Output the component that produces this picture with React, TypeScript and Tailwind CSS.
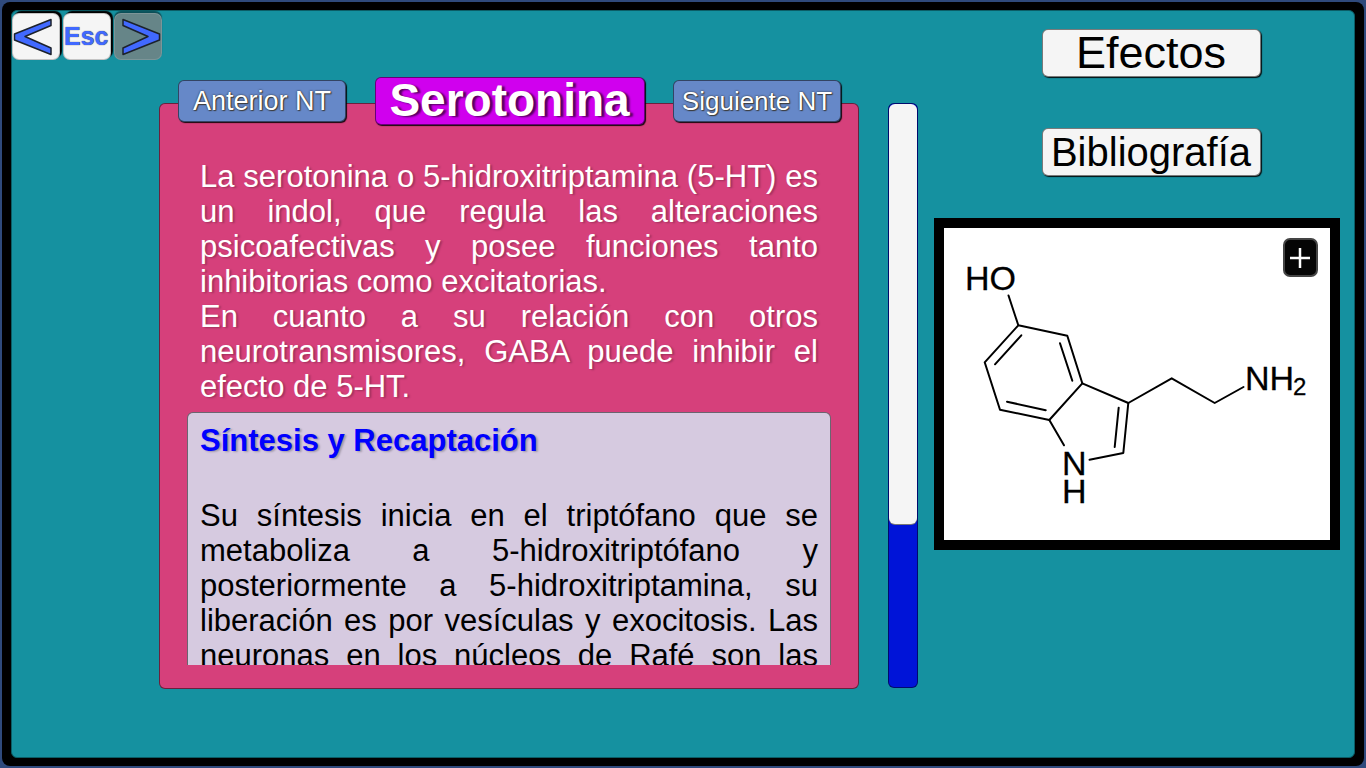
import { useRef } from "react";
import type { ChangeEvent, ReactNode } from "react";

const raised =
  "rounded-[6px] border border-black/50 shadow-[1px_1px_1px_rgba(0,0,0,0.9)]";

interface NavButtonProps {
  label: string;
  align: string;
  disabled?: boolean;
  children: ReactNode;
}

function NavButton({ label, align, disabled, children }: NavButtonProps) {
  return (
    <button
      type="button"
      aria-label={label}
      disabled={disabled}
      className={`${align} flex h-[47px] w-12 shrink-0 items-center rounded-[7px] border border-black/20 bg-[#f5f5f5] shadow-[2px_-2px_1px_#000] disabled:border-[#8aa0a3]/60 disabled:bg-[#668588] disabled:shadow-[0_-2px_1px_rgba(0,0,0,0.45)]`}
    >
      {children}
    </button>
  );
}

function Chevron({ flip }: { flip?: boolean }) {
  return (
    <svg viewBox="0 0 40 38" className="h-[38px] w-10 shrink-0" aria-hidden="true">
      <path
        d={flip ? "M2 1.5V7.5L27 18.5L2 30V36.5L38.5 22V16Z" : "M38 1.5V7.5L12 18.5L38 30V36.5L1.5 22V16Z"}
        fill="#4169ff"
        stroke="#1c222c"
        strokeWidth="1.5"
        strokeLinejoin="round"
      />
    </svg>
  );
}

function Molecule() {
  return (
    <svg
      viewBox="0 0 386 312"
      role="img"
      aria-label="Estructura de la serotonina"
      className="block w-full"
    >
      <g fill="none" stroke="#000" strokeWidth="2" strokeLinecap="round" strokeLinejoin="round">
        <path d="M64.5 67.5L74.3 97.3L123.3 107.7L138.3 155.3L105.3 192L56 181.7L40.7 134.3L74.3 97.3" />
        <path d="M77.3 107.3L51 136.3M116 115.3L128.3 152.7M101.7 182.3L63 173.7" />
        <path d="M138.3 155.3L184.3 175L179.3 225L145.5 231.7M174.7 179.7L170.7 219M105.3 192L120 217.3" />
        <path d="M184.3 175L227.7 150.3L270.7 175L299.5 159" />
      </g>
      <g className="font-['Liberation_Sans',Arial,sans-serif]" fill="#000" stroke="#000" strokeWidth="0.3" fontSize="34">
        <text x="21" y="62">HO</text>
        <text x="118" y="247">N</text>
        <text x="118" y="275">H</text>
        <text x="301" y="162">NH</text>
        <text x="349" y="167" fontSize="24">2</text>
      </g>
    </svg>
  );
}

export default function App() {
  const viewport = useRef<HTMLDivElement>(null);

  const scrollText = (event: ChangeEvent<HTMLInputElement>) => {
    const box = viewport.current;
    if (box) {
      box.scrollTop = (Number(event.target.value) / 100) * (box.scrollHeight - box.clientHeight);
    }
  };

  return (
    <div className="h-screen min-h-[600px] w-full bg-[#2f4a7c] p-[2px] font-['Liberation_Sans',Arial,sans-serif]">
      <div className="h-full rounded-[8px] bg-black px-[9px] py-2">
        <main className="flex h-full items-start rounded-[6px] border border-[#0b5d66] bg-[#1591a0]">
          <nav aria-label="Navegación" className="flex w-0 min-w-[147px] flex-1 gap-[3px] pt-[2px]">
            <NavButton label="Atrás" align="justify-start"><Chevron /></NavButton>
            <NavButton label="Salir" align="justify-start">
              <span className="text-[25px] font-bold text-[#4169ff] [text-shadow:0_0_1px_#1c222c]">Esc</span>
            </NavButton>
            <NavButton label="Adelante" align="justify-end" disabled><Chevron flip /></NavButton>
          </nav>

          <article className="flex h-full w-[700px] flex-col pt-[66px] pb-[68px]">
            <header className="relative z-10 -mb-[22px] flex items-center justify-between pr-[18px] pl-[19px]">
              <button type="button" className={`${raised} h-[42px] w-[168px] bg-[#6688c8] text-[27px] leading-none text-white [text-shadow:0_0_2px_#222,1px_1px_1px_#444]`}>
                Anterior NT
              </button>
              <h1 className={`${raised} flex h-12 w-[270px] items-center justify-center bg-[#d000ee] pb-[2px] text-[46px] leading-none font-bold text-white [text-shadow:3px_1px_2px_rgba(0,0,0,0.6)]`}>
                Serotonina
              </h1>
              <button type="button" className={`${raised} h-[42px] w-[168px] bg-[#6688c8] text-[26px] leading-none text-white [text-shadow:0_0_2px_#222,1px_1px_1px_#444]`}>
                Siguiente NT
              </button>
            </header>

            <section className="flex min-h-0 flex-1 flex-col rounded-[6px] border border-black/50 bg-[#d6407b] px-[27px] pt-[55px] pb-[23px]">
              <div ref={viewport} className="min-h-0 flex-1 overflow-hidden text-[31px] leading-[35px]">
                <div className="px-[13px] pb-2 text-justify text-white [text-shadow:2px_1px_2px_rgba(0,0,0,0.25)]">
                  <p>
                    La serotonina o 5-hidroxitriptamina (5-HT) es un indol, que regula las alteraciones
                    psicoafectivas y posee funciones tanto inhibitorias como excitatorias.
                  </p>
                  <p>
                    En cuanto a su relación con otros neurotransmisores, GABA puede inhibir el efecto de
                    5-HT.
                  </p>
                </div>
                <div className="rounded-t-[6px] border border-b-0 border-black/50 bg-[#d6cae0] px-3 pt-[10px]">
                  <h2 className="pb-10 font-bold text-[#0000ff] [text-shadow:2px_1px_2px_rgba(0,0,0,0.25)]">
                    Síntesis y Recaptación
                  </h2>
                  <p className="text-justify text-black [text-align-last:justify]">
                    Su síntesis inicia en el triptófano que se metaboliza a 5-hidroxitriptófano y
                    posteriormente a 5-hidroxitriptamina, su liberación es por vesículas y exocitosis.
                    Las neuronas en los núcleos de Rafé son las
                  </p>
                </div>
              </div>
            </section>
          </article>

          <div className="ml-[29px] h-full w-[30px] pt-[92px] pb-[69px]">
            <input
              type="range"
              min="0"
              max="100"
              defaultValue="0"
              onChange={scrollText}
              aria-label="Desplazar texto"
              className="block h-full w-full appearance-none rounded-[6px] border border-black/50 bg-[#0014d8] [writing-mode:vertical-lr] [&::-webkit-slider-thumb]:h-[420px] [&::-webkit-slider-thumb]:w-[28px] [&::-webkit-slider-thumb]:appearance-none [&::-webkit-slider-thumb]:rounded-[6px] [&::-webkit-slider-thumb]:bg-[#f5f5f5] [&::-webkit-slider-thumb]:shadow-[0_1px_0_#777]"
            />
          </div>

          <aside className="mr-[14px] ml-4 w-[406px] pt-[18px]">
            <div className="flex flex-col items-center gap-[51px] pl-7">
              <button type="button" className={`${raised} h-12 w-[219px] bg-[#f5f5f5] pb-[2px] text-[45px] leading-none text-black`}>
                Efectos
              </button>
              <button type="button" className={`${raised} h-12 w-[219px] bg-[#f5f5f5] text-[40px] leading-none text-black`}>
                Bibliografía
              </button>
            </div>
            <figure className="relative mt-[42px] border-[10px] border-black bg-white">
              <Molecule />
              <button
                type="button"
                aria-label="Ampliar imagen"
                className="absolute top-[10px] right-3 flex h-[39px] w-[35px] items-center justify-center rounded-[7px] border-2 border-[#444] bg-[#050505] pr-[2px]"
              >
                <svg viewBox="0 0 22 22" className="h-[22px] w-[22px] shrink-0" aria-hidden="true">
                  <path d="M11 1V21M1 11H21" stroke="#fff" strokeWidth="2.5" />
                </svg>
              </button>
            </figure>
          </aside>
        </main>
      </div>
    </div>
  );
}
